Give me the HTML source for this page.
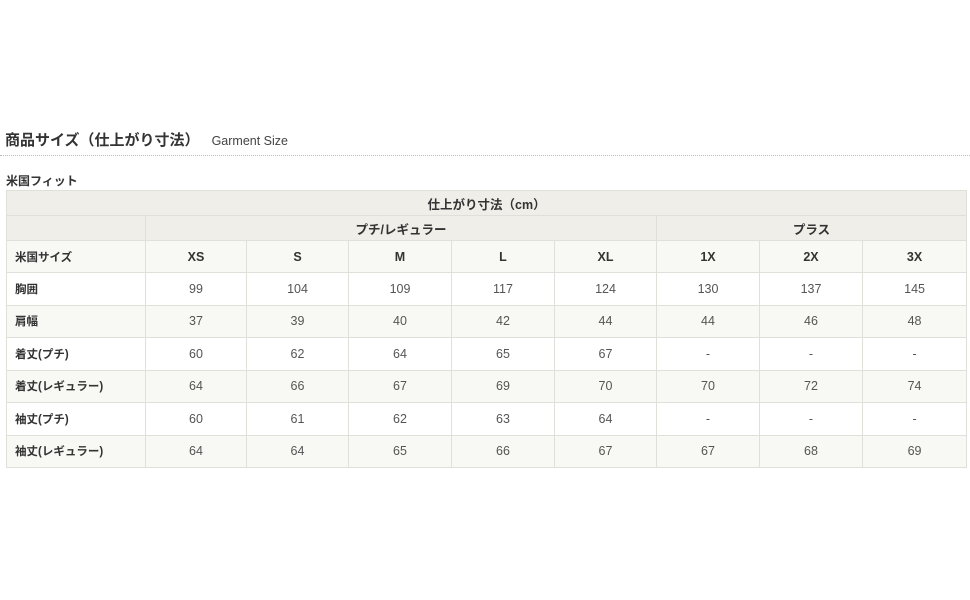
<!DOCTYPE html>
<html><head><meta charset="utf-8"><style>
body{margin:0;background:#fff;font-family:"Liberation Sans","Noto Sans CJK JP",sans-serif;color:#333;}
.h{position:absolute;left:5px;top:129px;font-size:15px;font-weight:bold;color:#333;white-space:nowrap}
.h span{font-size:12.5px;font-weight:normal;margin-left:12px;color:#444}
.line{position:absolute;left:0;top:155px;width:970px;border-top:1px dotted #bbb;}
.sub{position:absolute;left:6px;top:172px;font-size:12px;font-weight:bold;}
table{position:absolute;left:6px;top:190px;border-collapse:collapse;width:960px;table-layout:fixed;font-size:12.5px;}
td{border:1px solid #e0e0da;text-align:center;height:31.5px;padding:0;color:#555}
tr.a td{background:#efeee8;height:24px;font-weight:bold;color:#333}
tr.s td{background:#f8f8f4;font-weight:bold;color:#333;height:31px}
tr.l td{background:#f8f8f4}
td.f{text-align:left;padding-left:8px;font-weight:bold;color:#333;font-size:11.5px}
</style></head><body>
<div class="h">商品サイズ（仕上がり寸法）<span>Garment Size</span></div>
<div class="line"></div>
<div class="sub">米国フィット</div>
<table>
<colgroup><col style="width:139px"><col style="width:101px"><col style="width:102px"><col style="width:103px"><col style="width:103px"><col style="width:102px"><col style="width:103px"><col style="width:103px"><col style="width:104px"></colgroup>
<tr class="a"><td colspan="9">仕上がり寸法（cm）</td></tr>
<tr class="a"><td></td><td colspan="5">プチ/レギュラー</td><td colspan="3">プラス</td></tr>
<tr class="s"><td class="f">米国サイズ</td><td>XS</td><td>S</td><td>M</td><td>L</td><td>XL</td><td>1X</td><td>2X</td><td>3X</td></tr>
<tr><td class="f">胸囲</td><td>99</td><td>104</td><td>109</td><td>117</td><td>124</td><td>130</td><td>137</td><td>145</td></tr>
<tr class="l"><td class="f">肩幅</td><td>37</td><td>39</td><td>40</td><td>42</td><td>44</td><td>44</td><td>46</td><td>48</td></tr>
<tr><td class="f">着丈(プチ)</td><td>60</td><td>62</td><td>64</td><td>65</td><td>67</td><td>-</td><td>-</td><td>-</td></tr>
<tr class="l"><td class="f">着丈(レギュラー)</td><td>64</td><td>66</td><td>67</td><td>69</td><td>70</td><td>70</td><td>72</td><td>74</td></tr>
<tr><td class="f">袖丈(プチ)</td><td>60</td><td>61</td><td>62</td><td>63</td><td>64</td><td>-</td><td>-</td><td>-</td></tr>
<tr class="l"><td class="f">袖丈(レギュラー)</td><td>64</td><td>64</td><td>65</td><td>66</td><td>67</td><td>67</td><td>68</td><td>69</td></tr>
</table>
</body></html>
